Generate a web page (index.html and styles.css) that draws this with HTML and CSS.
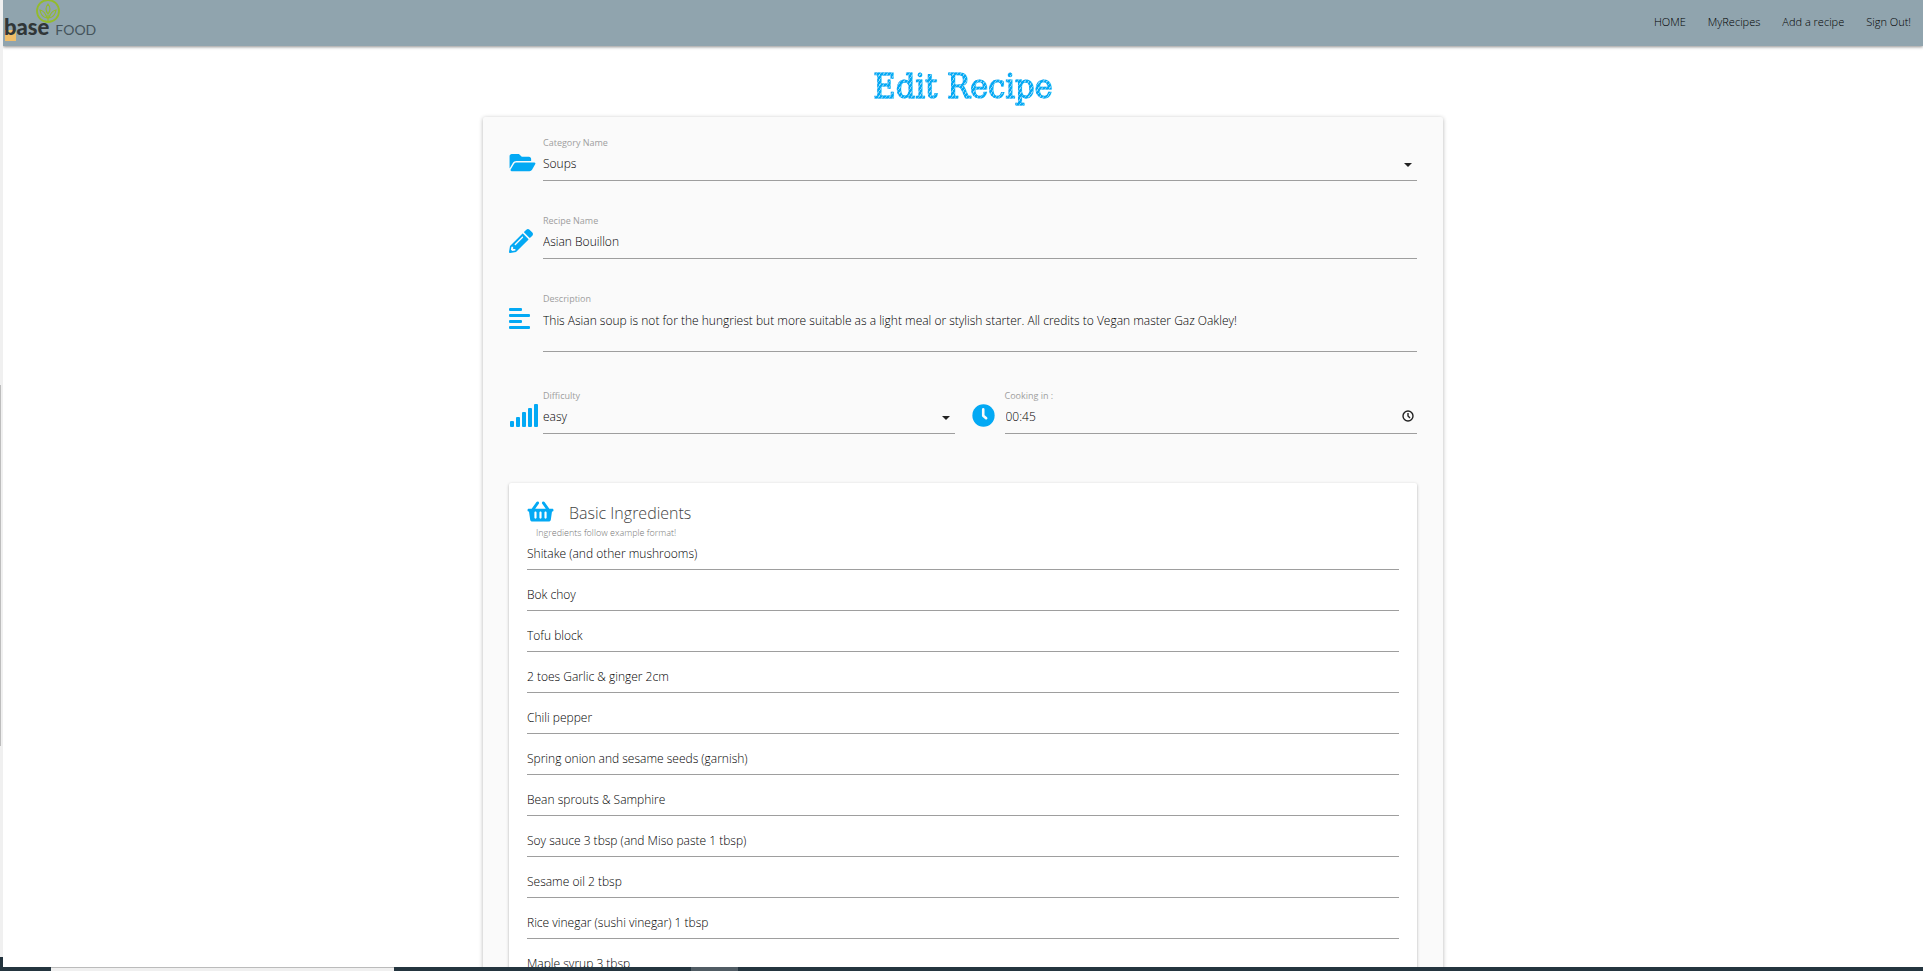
FILE: index.html
```html
<!DOCTYPE html>
<html lang="en">
<head>
<meta charset="utf-8">
<title>Edit Recipe</title>
<link rel="stylesheet" href="styles.css">
</head>
<body>
<div class="window">
  <div class="side-scroll"><div class="side-thumb"></div></div>
  <div class="page">
    <header class="nav">
      <a class="logo" href="#">
        <svg class="logo-mark" viewBox="0 0 26 24" aria-hidden="true"><g fill="none" stroke="#93bb2c" stroke-width="1.2"><circle cx="13" cy="11" r="11" stroke-width="1.8"/><path d="M13 22v-7M13 4q-4 5 0 10q4-5 0-10zM5 10q5 1 7 8Q6 17 5 10zM21 10q-5 1-7 8q6-1 7-8z"/></g></svg>
        <span class="logo-base">base</span><span class="logo-food">FOOD</span>
      </a>
      <nav class="links">
        <a href="#">HOME</a><a href="#">MyRecipes</a><a href="#">Add a recipe</a><a href="#">Sign Out!</a>
      </nav>
    </header>
    <main class="main">
      <h1 class="title">Edit Recipe</h1>
      <form class="card">
        <div class="field">
          <svg class="icon wide" viewBox="0 0 576 512" aria-hidden="true"><path d="M572.694 292.093L500.27 416.248A63.997 63.997 0 0 1 444.989 448H45.025c-18.523 0-30.064-20.093-20.731-36.093l72.424-124.155A64 64 0 0 1 152 256h399.964c18.523 0 30.064 20.093 20.73 36.093zM152 224h328v-48c0-26.51-21.49-48-48-48H272l-64-64H48C21.490 64 0 85.490 0 112v278.046l69.077-118.418C86.214 242.250 117.989 224 152 224z"/></svg>
          <div class="control">
            <label for="category">Category Name</label>
            <div class="pick"><select id="category"><option>Soups</option></select><svg class="caret" viewBox="0 0 8 4" aria-hidden="true"><path d="M0 0h8L4 4z"/></svg></div>
          </div>
        </div>
        <div class="field">
          <svg class="icon pencil" viewBox="0 0 512 512" aria-hidden="true"><path d="M497.900 142.100l-46.100 46.100c-4.700 4.700-12.300 4.700-17 0l-111-111c-4.700-4.700-4.700-12.300 0-17l46.100-46.100c18.700-18.700 49.100-18.700 67.900 0l60.100 60.100c18.800 18.700 18.800 49.100 0 67.900zM284.200 99.800L21.600 362.400.4 483.900c-2.900 16.400 11.400 30.600 27.800 27.800l121.500-21.300 262.600-262.600c4.700-4.700 4.700-12.300 0-17l-111-111c-4.800-4.700-12.400-4.700-17.100 0zM124.100 339.900c-5.500-5.500-5.500-14.300 0-19.800l154-154c5.500-5.500 14.300-5.500 19.800 0s5.500 14.300 0 19.800l-154 154c-5.500 5.500-14.300 5.500-19.800 0zM88 424h48v36.300l-64.500 11.300-31.100-31.100L51.700 376H88v48z"/></svg>
          <div class="control">
            <label for="name">Recipe Name</label>
            <input id="name" type="text" value="Asian Bouillon">
          </div>
        </div>
        <div class="field tall">
          <svg class="icon" viewBox="0 0 21 23" aria-hidden="true"><rect y="1" width="13" height="3" rx="1"/><rect y="7" width="21" height="3" rx="1"/><rect y="13" width="13" height="3" rx="1"/><rect y="19" width="21" height="3" rx="1"/></svg>
          <div class="control">
            <label for="description">Description</label>
            <textarea id="description">This Asian soup is not for the hungriest but more suitable as a light meal or stylish starter. All credits to Vegan master Gaz Oakley!</textarea>
          </div>
        </div>
        <div class="pair">
          <div class="field">
            <svg class="icon signal" viewBox="0 0 28 24" aria-hidden="true"><rect y="18" width="4" height="6" rx="1"/><rect x="6" y="14" width="4" height="10" rx="1"/><rect x="12" y="9" width="4" height="15" rx="1"/><rect x="18" y="5" width="4" height="19" rx="1"/><rect x="24" y="1" width="4" height="23" rx="1"/></svg>
            <div class="control">
              <label for="difficulty">Difficulty</label>
              <div class="pick"><select id="difficulty"><option>easy</option></select><svg class="caret" viewBox="0 0 8 4" aria-hidden="true"><path d="M0 0h8L4 4z"/></svg></div>
            </div>
          </div>
          <div class="field">
            <svg class="icon round" viewBox="0 0 512 512" aria-hidden="true"><path d="M256 8a248 248 0 1 0 0 496a248 248 0 1 0 0-496z"/><path d="M250 120v140l65 57" fill="none" stroke="#fafafa" stroke-width="58" stroke-linecap="round" stroke-linejoin="round"/></svg>
            <div class="control">
              <label for="time">Cooking in :</label>
              <div class="pick time"><input id="time" type="text" value="00:45"><svg class="clock" viewBox="0 0 12 12" aria-hidden="true"><circle cx="6" cy="6" r="5"/><path d="M6 3v3l2 2"/></svg></div>
            </div>
          </div>
        </div>
        <section class="ingredients">
          <h2 class="heading"><svg class="icon wide" viewBox="0 0 576 512" aria-hidden="true"><path d="M576 216v16c0 13.255-10.745 24-24 24h-8l-26.113 182.788C514.509 462.435 494.257 480 470.370 480H105.630c-23.887 0-44.139-17.565-47.518-41.212L32 256h-8c-13.255 0-24-10.745-24-24v-16c0-13.255 10.745-24 24-24h67.341l106.780-146.821c10.395-14.292 30.407-17.453 44.701-7.058 14.293 10.395 17.453 30.408 7.058 44.701L170.477 192h235.046L326.120 82.821c-10.395-14.292-7.234-34.306 7.059-44.701 14.291-10.395 34.306-7.235 44.701 7.058L484.659 192H552c13.255 0 24 10.745 24 24zM312 392V280c0-13.255-10.745-24-24-24s-24 10.745-24 24v112c0 13.255 10.745 24 24 24s24-10.745 24-24zm112 0V280c0-13.255-10.745-24-24-24s-24 10.745-24 24v112c0 13.255 10.745 24 24 24s24-10.745 24-24zm-224 0V280c0-13.255-10.745-24-24-24s-24 10.745-24 24v112c0 13.255 10.745 24 24 24s24-10.745 24-24z"/></svg>Basic Ingredients</h2>
          <p class="hint">Ingredients follow example format!</p>
          <div class="list">
            <input type="text" aria-label="Ingredient 1" value="Shitake (and other mushrooms)">
            <input type="text" aria-label="Ingredient 2" value="Bok choy">
            <input type="text" aria-label="Ingredient 3" value="Tofu block">
            <input type="text" aria-label="Ingredient 4" value="2 toes Garlic &amp; ginger 2cm">
            <input type="text" aria-label="Ingredient 5" value="Chili pepper">
            <input type="text" aria-label="Ingredient 6" value="Spring onion and sesame seeds (garnish)">
            <input type="text" aria-label="Ingredient 7" value="Bean sprouts &amp; Samphire">
            <input type="text" aria-label="Ingredient 8" value="Soy sauce 3 tbsp (and Miso paste 1 tbsp)">
            <input type="text" aria-label="Ingredient 9" value="Sesame oil 2 tbsp">
            <input type="text" aria-label="Ingredient 10" value="Rice vinegar (sushi vinegar) 1 tbsp">
            <input type="text" aria-label="Ingredient 11" value="Maple syrup 3 tbsp">
          </div>
        </section>
      </form>
    </main>
  </div>
  <div class="taskbar"><div class="search"></div><div class="task"></div></div>
</div>
</body>
</html>
```
FILE: styles.css
```css
* { box-sizing: border-box; }
body { margin: 0; font-family: "Open Sans", "Noto Sans", sans-serif; font-size: 12px; font-weight: 300; color: #000; background: #fff; }
.window { height: 100vh; display: grid; grid-template-columns: 3px 1fr; grid-template-rows: minmax(0, 1fr) 4px; overflow: hidden; }
.side-scroll { display: flex; flex-direction: column; justify-content: center; background: #f0f0f0; border-bottom: 10px solid #22333d; padding-top: 174px; }
.side-thumb { width: 1px; height: 361px; background: #bdbdbd; }
.page { overflow: hidden; }
.nav { position: relative; z-index: 1; height: 46px; padding-right: 12px; display: flex; justify-content: space-between; background: #90a4ae; box-shadow: 0 1px 3px rgba(0,0,0,.45); }
.logo { position: relative; display: flex; align-items: baseline; gap: 6px; padding: 15px 0 0 1px; text-decoration: none; line-height: 24px; font-family: Lato, sans-serif; }
.logo::before { content: ""; position: absolute; left: 2px; top: 30px; width: 11px; height: 11px; background: #f0bd68; }
.logo-mark { position: absolute; left: 32px; top: 0; width: 26px; height: 24px; }
.logo-base { position: relative; font-size: 22px; font-weight: 900; color: #303638; }
.logo-food { position: relative; font-size: 14px; font-weight: 400; color: #45545c; }
.links { display: flex; align-items: center; gap: 22px; padding-bottom: 3px; }
.links a { color: #000; text-decoration: none; font-size: 11px; }
.title { margin: 0; padding: 16px 0 7px; line-height: 48px; text-align: center; font-family: "DejaVu Serif Condensed", "DejaVu Serif", serif; font-stretch: condensed; font-size: 34px; font-weight: 400; color: transparent; -webkit-text-stroke: 1px rgba(3,169,244,.6); background: repeating-linear-gradient(125deg, #03a9f4 0 2px, #8fd8f9 2px 3px); -webkit-background-clip: text; background-clip: text; }
.card { width: 50%; margin: 0 auto; padding: 18px 26px; background: #fafafa; border-radius: 2px; box-shadow: 0 1px 4px rgba(0,0,0,.3); }
.field { display: flex; height: 78px; }
.tall { height: 97px; }
.icon { flex: none; width: 21px; height: 23px; margin: 16px 13px 0 0; fill: #03a9f4; }
.wide { width: 27px; margin-right: 7px; }
.pencil { width: 24px; height: 24px; margin-right: 10px; }
.round { width: 23px; margin-right: 10px; }
.signal { width: 28px; height: 24px; margin: 15px 5px 0 1px; }
.control { flex: 1; min-width: 0; }
label { display: block; font-size: 9px; line-height: 16px; font-weight: 400; color: #9e9e9e; }
input, select, textarea { display: block; width: 100%; height: 30px; margin: 0; padding: 0 0 4px; border: 0; border-bottom: 1px solid #9e9e9e; border-radius: 0; outline: 0; background: transparent; font: inherit; color: #000; appearance: none; }
textarea { height: 45px; padding: 5px 0 0; line-height: 18px; resize: none; overflow: hidden; }
.pick { position: relative; }
.caret { position: absolute; right: 5px; top: 12px; width: 8px; height: 4px; fill: #222; }
.clock { position: absolute; right: 3px; top: 6px; width: 12px; height: 12px; fill: none; stroke: #222; stroke-width: 1.4; }
.time input { padding-left: 1px; }
.pair { display: grid; grid-template-columns: 1fr 1fr; gap: 17px; margin-bottom: 17px; }
.ingredients { padding: 16px 18px; background: #fff; border-radius: 2px; box-shadow: 0 1px 3px rgba(0,0,0,.3); }
.heading { display: flex; align-items: center; margin: 0; height: 28px; font-size: 16px; font-weight: 300; color: #444; }
.heading .icon { margin: 0 15px 3px 0; }
.hint { margin: 0 0 1px 9px; font-size: 9px; line-height: 12px; color: #777; }
.list { display: grid; gap: 11px; }
.list input { padding-bottom: 2px; }
.taskbar { grid-column: 1 / -1; display: flex; background: #24353f; }
.search { width: 343px; margin-left: 51px; background: #f0f0f0; border-top: 1px solid #bbb; }
.task { width: 47px; margin-left: 297px; background: #505c64; }
```
